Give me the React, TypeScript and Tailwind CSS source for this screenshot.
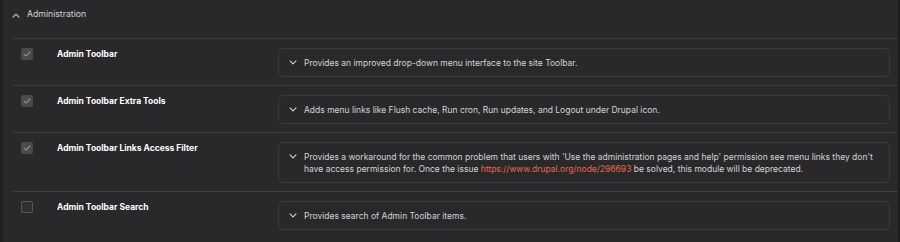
import React from 'react';

type Mod = {
  name: string;
  enabled: boolean;
  desc: React.ReactNode;
};

const modules: Mod[] = [
  {
    name: 'Admin Toolbar',
    enabled: true,
    desc: 'Provides an improved drop-down menu interface to the site Toolbar.',
  },
  {
    name: 'Admin Toolbar Extra Tools',
    enabled: true,
    desc: 'Adds menu links like Flush cache, Run cron, Run updates, and Logout under Drupal icon.',
  },
  {
    name: 'Admin Toolbar Links Access Filter',
    enabled: true,
    desc: (
      <>
        Provides a workaround for the common problem that users with 'Use the administration pages and help' permission see menu links they don't have access permission for. Once the issue{' '}
        <a className="text-[#e5694c]" href="#">https://www.drupal.org/node/296693</a> be solved, this module will be deprecated.
      </>
    ),
  },
  {
    name: 'Admin Toolbar Search',
    enabled: false,
    desc: 'Provides search of Admin Toolbar items.',
  },
];

const Chevron = ({ up = false }: { up?: boolean }) => (
  <svg width="8" height="5" viewBox="0 0 8 5" fill="none" className="shrink-0">
    <path
      d={up ? 'M1 4.2L4 1.2L7 4.2' : 'M1 0.8L4 3.8L7 0.8'}
      stroke="#d0d0d0"
      strokeWidth="1.1"
      strokeLinecap="round"
      strokeLinejoin="round"
    />
  </svg>
);

const Checkbox = ({ checked }: { checked: boolean }) =>
  checked ? (
    <div className="flex h-[12px] w-[12px] items-center justify-center rounded-[2px] bg-[#4a4a4d]">
      <svg width="8" height="6" viewBox="0 0 8 6" fill="none">
        <path d="M1 3.2L3 5L7 1" stroke="#8d8d90" strokeWidth="1.1" strokeLinecap="round" strokeLinejoin="round" />
      </svg>
    </div>
  ) : (
    <div className="h-[12px] w-[12px] rounded-[2px] border border-[#58585b] bg-[#303033]" />
  );

export default function App() {
  return (
    <div className="h-[242px] w-[900px] overflow-hidden bg-[#1f1f21] font-['Inter',sans-serif]">
      <div className="ml-[3px] mr-[2px] h-full bg-[#29292b]">
        <div className="flex h-[38px] items-center gap-[7px] pl-[9px] pb-[8px]">
          <Chevron up />
          <span className="text-[8.7px] text-[#d2d2d4]">Administration</span>
        </div>
        <div className="ml-[10px] mr-[1px]">
          {modules.map((m) => (
            <div key={m.name} className="flex border-t border-[#3e3e41] pb-[8px] pt-[9px] pr-[7px]">
              <div className="flex w-[265px] shrink-0 items-start">
                <div className="ml-[8px] w-[36px]">
                  <Checkbox checked={m.enabled} />
                </div>
                <div className="pt-[1px] text-[8.5px] font-bold leading-[11px] text-white">{m.name}</div>
              </div>
              <div className="flex flex-1 items-start gap-[7px] rounded-[5px] border border-[#3a3a3d] py-[7.5px] pl-[10px] pr-[12px]">
                <div className="flex h-[12px] items-center">
                  <Chevron />
                </div>
                <div className="text-[8.5px] leading-[12px] text-[#d4d4d6]">{m.desc}</div>
              </div>
            </div>
          ))}
        </div>
      </div>
    </div>
  );
}
